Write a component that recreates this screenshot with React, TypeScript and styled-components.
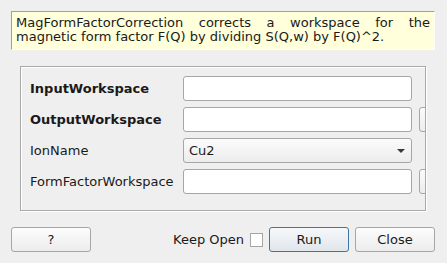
import styled, { createGlobalStyle } from 'styled-components'

const GlobalStyle = createGlobalStyle`
  html, body {
    margin: 0;
    padding: 0;
    background: #efefef;
  }
  body {
    font-family: 'DejaVu Sans', sans-serif;
    font-size: 13px;
    color: #1a1a1a;
  }
`

const Window = styled.div`
  width: 447px;
  height: 263px;
  box-sizing: border-box;
  padding: 11px 12px 0 11px;
  display: flex;
  flex-direction: column;
  overflow: hidden;
`

const Description = styled.div`
  height: 39px;
  box-sizing: border-box;
  background: #ffffdc;
  border-top: 1px solid #a0a0a0;
  border-left: 1px solid #a0a0a0;
  border-right: 1px solid #ffffff;
  border-bottom: 1px solid #ffffff;
  padding: 4px 4px 0 4px;
  line-height: 14px;
  text-align: justify;
`

const Group = styled.div`
  margin: 16px 9px 0 9px;
  height: 145px;
  box-sizing: border-box;
  border: 1px solid #a9a9a9;
  box-shadow: inset 1px 1px 0 #ffffff, 1px 1px 0 #ffffff;
  padding: 9px 0 0 9px;
  overflow: hidden;
`

const Grid = styled.div`
  display: grid;
  grid-template-columns: 147px 229px 30px;
  column-gap: 6px;
  row-gap: 6px;
  align-items: center;
`

const Label = styled.div<{ $bold?: boolean }>`
  font-weight: ${({ $bold }) => ($bold ? 'bold' : 'normal')};
  white-space: nowrap;
`

const Field = styled.div`
  height: 25px;
  box-sizing: border-box;
  background: #ffffff;
  border: 1px solid #a6a6a6;
  border-radius: 3px;
`

const Combo = styled.div`
  height: 25px;
  box-sizing: border-box;
  border: 1px solid #a6a6a6;
  border-radius: 3px;
  background: linear-gradient(#fcfcfc, #ececec);
  display: flex;
  align-items: center;
  justify-content: space-between;
  padding: 0 6px 0 5px;
`

const Arrow = styled.div`
  width: 0;
  height: 0;
  border-left: 4px solid transparent;
  border-right: 4px solid transparent;
  border-top: 4px solid #3a3a3a;
  margin-top: 1px;
`

const Browse = styled.div`
  height: 25px;
  margin-left: 1px;
  box-sizing: border-box;
  border: 1px solid #a6a6a6;
  border-radius: 3px;
  background: linear-gradient(#fcfcfc, #ececec);
`

const Footer = styled.div`
  margin-top: 16px;
  display: flex;
  align-items: center;
`

const Button = styled.div<{ $default?: boolean }>`
  width: 80px;
  height: 25px;
  box-sizing: border-box;
  border: 1px solid ${({ $default }) => ($default ? '#3a77a6' : '#a6a6a6')};
  border-radius: 3px;
  background: ${({ $default }) =>
    $default ? 'linear-gradient(#f6f8fa, #e1e6eb)' : 'linear-gradient(#fcfcfc, #ececec)'};
  display: flex;
  align-items: center;
  justify-content: center;
`

const Spacer = styled.div`
  flex-grow: 1;
`

const KeepOpen = styled.label`
  display: flex;
  align-items: center;
  gap: 6px;
  margin-right: 6px;
`

const Check = styled.span`
  width: 13px;
  height: 14px;
  box-sizing: border-box;
  background: #ffffff;
  border: 1px solid #a6a6a6;
`

const Actions = styled.div`
  display: flex;
  gap: 6px;
`

const rows = [
  { name: 'InputWorkspace', bold: true, browse: false },
  { name: 'OutputWorkspace', bold: true, browse: true },
  { name: 'IonName', bold: false, combo: 'Cu2' },
  { name: 'FormFactorWorkspace', bold: false, browse: true },
]

export default function App() {
  return (
    <>
      <GlobalStyle />
      <Window>
        <Description>
          MagFormFactorCorrection corrects a workspace for the magnetic form factor F(Q) by dividing
          S(Q,w) by F(Q)^2.
        </Description>
        <Group>
          <Grid>
            {rows.map((r) => (
              <Row key={r.name} {...r} />
            ))}
          </Grid>
        </Group>
        <Footer>
          <Button>?</Button>
          <Spacer />
          <KeepOpen>
            Keep Open
            <Check />
          </KeepOpen>
          <Actions>
            <Button $default>Run</Button>
            <Button>Close</Button>
          </Actions>
        </Footer>
      </Window>
    </>
  )
}

const Row = ({
  name,
  bold,
  browse,
  combo,
}: {
  name: string
  bold: boolean
  browse?: boolean
  combo?: string
}) => (
  <>
    <Label $bold={bold}>{name}</Label>
    {combo ? (
      <Combo>
        {combo}
        <Arrow />
      </Combo>
    ) : (
      <Field />
    )}
    {browse ? <Browse /> : <span />}
  </>
)
